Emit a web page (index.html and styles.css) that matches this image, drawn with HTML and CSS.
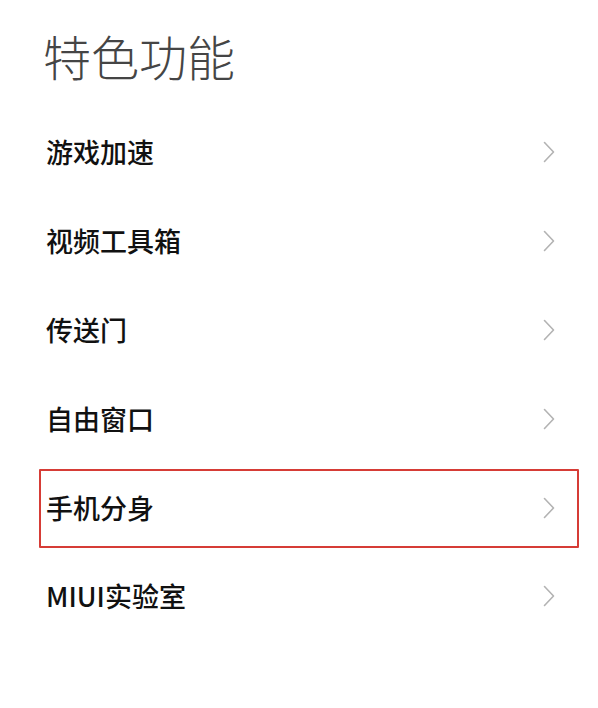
FILE: index.html
```html
<!DOCTYPE html>
<html lang="zh-CN">
<head>
<meta charset="utf-8">
<title>特色功能</title>
<link rel="stylesheet" href="styles.css">
</head>
<body>
<div class="page">
  <h1 class="title">特色功能</h1>
  <ul class="list">
    <li class="row"><span class="label">游戏加速</span><svg class="chev" viewBox="0 0 12 22" width="12" height="22"><polyline points="1.5,1.5 10.5,11 1.5,20.5"/></svg></li>
    <li class="row"><span class="label">视频工具箱</span><svg class="chev" viewBox="0 0 12 22" width="12" height="22"><polyline points="1.5,1.5 10.5,11 1.5,20.5"/></svg></li>
    <li class="row"><span class="label">传送门</span><svg class="chev" viewBox="0 0 12 22" width="12" height="22"><polyline points="1.5,1.5 10.5,11 1.5,20.5"/></svg></li>
    <li class="row"><span class="label">自由窗口</span><svg class="chev" viewBox="0 0 12 22" width="12" height="22"><polyline points="1.5,1.5 10.5,11 1.5,20.5"/></svg></li>
    <li class="row row-marked"><span class="label">手机分身</span><svg class="chev" viewBox="0 0 12 22" width="12" height="22"><polyline points="1.5,1.5 10.5,11 1.5,20.5"/></svg></li>
    <li class="row"><span class="label">MIUI实验室</span><svg class="chev" viewBox="0 0 12 22" width="12" height="22"><polyline points="1.5,1.5 10.5,11 1.5,20.5"/></svg></li>
  </ul>
</div>
</body>
</html>
```
FILE: styles.css
```css
html, body {
  margin: 0;
  padding: 0;
  background: #ffffff;
}
.page {
  width: 598px;
  min-height: 708px;
  font-family: "Noto Sans CJK SC", "Noto Sans", sans-serif;
}
.title {
  margin: 0;
  padding: 23px 0 0 43px;
  font-size: 48px;
  line-height: 64px;
  font-weight: 300;
  color: #454545;
  letter-spacing: 0;
}
.list {
  list-style: none;
  margin: 21px 0 0 0;
  padding: 0;
}
.row {
  position: relative;
  height: 88.8px;
  display: flex;
  align-items: center;
  justify-content: space-between;
  padding: 0 43px 0 46px;
}
.label {
  font-size: 27px;
  font-weight: 500;
  color: #111111;
  line-height: 36px;
}
.chev {
  display: block;
  fill: none;
  stroke: #b3b3b3;
  stroke-width: 1.6;
  stroke-linecap: round;
  stroke-linejoin: round;
}
.row-marked::after {
  content: "";
  position: absolute;
  left: 39px;
  right: 19px;
  top: 5.5px;
  bottom: 3.5px;
  border: 2px solid #d63c36;
  border-radius: 1px;
  pointer-events: none;
}
```
